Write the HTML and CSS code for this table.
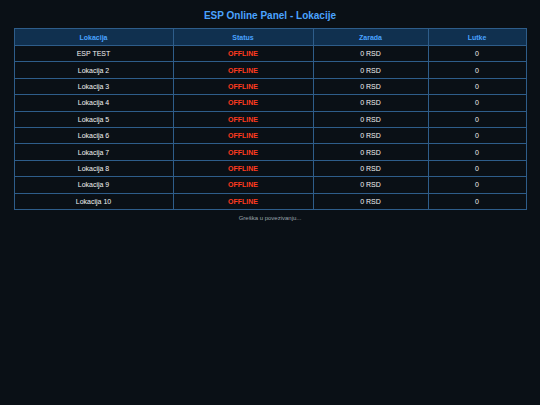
FILE: index.html
```html
<!DOCTYPE html>
<html>
<head>
<meta charset="utf-8">
<link rel="stylesheet" href="styles.css">
</head>
<body>
<h1 class="title">ESP Online Panel - Lokacije</h1>
<table class="grid">
<thead>
<tr><th class="c1">Lokacija</th><th class="c2">Status</th><th class="c3">Zarada</th><th class="c4">Lutke</th></tr>
</thead>
<tbody>
<tr><td>ESP TEST</td><td class="off">OFFLINE</td><td>0 RSD</td><td>0</td></tr>
<tr><td>Lokacija 2</td><td class="off">OFFLINE</td><td>0 RSD</td><td>0</td></tr>
<tr><td>Lokacija 3</td><td class="off">OFFLINE</td><td>0 RSD</td><td>0</td></tr>
<tr><td>Lokacija 4</td><td class="off">OFFLINE</td><td>0 RSD</td><td>0</td></tr>
<tr><td>Lokacija 5</td><td class="off">OFFLINE</td><td>0 RSD</td><td>0</td></tr>
<tr><td>Lokacija 6</td><td class="off">OFFLINE</td><td>0 RSD</td><td>0</td></tr>
<tr><td>Lokacija 7</td><td class="off">OFFLINE</td><td>0 RSD</td><td>0</td></tr>
<tr><td>Lokacija 8</td><td class="off">OFFLINE</td><td>0 RSD</td><td>0</td></tr>
<tr><td>Lokacija 9</td><td class="off">OFFLINE</td><td>0 RSD</td><td>0</td></tr>
<tr><td>Lokacija 10</td><td class="off">OFFLINE</td><td>0 RSD</td><td>0</td></tr>
</tbody>
</table>
<p class="status">Greška u povezivanju...</p>
</body>
</html>
```
FILE: styles.css
```css
html, body {
  margin: 0;
  padding: 0;
  background: #0a1016;
  font-family: "Liberation Sans", Arial, sans-serif;
  color: #f2f2f2;
}
body {
  padding-top: 9px;
}
.title {
  margin: 0 0 6px 0;
  text-align: center;
  font-size: 10px;
  font-weight: bold;
  color: #4aa3ff;
  line-height: 13px;
}
.grid {
  width: 513px;
  margin: 0 auto;
  border-collapse: collapse;
  font-size: 7px;
}
.grid th, .grid td {
  border: 1px solid #2e5d8a;
  text-align: center;
  padding: 0;
}
.grid th {
  background: #10304f;
  color: #4aa3ff;
  font-weight: bold;
  height: 16px;
}
.grid td {
  height: 15.4px;
}
.c1 { width: 158px; }
.c2 { width: 139px; }
.c3 { width: 114px; }
.off {
  color: #ff3b1f;
  font-weight: bold;
}
.status {
  margin: 5px 0 0 0;
  text-align: center;
  font-size: 6px;
  color: #9aa3ab;
}
```
